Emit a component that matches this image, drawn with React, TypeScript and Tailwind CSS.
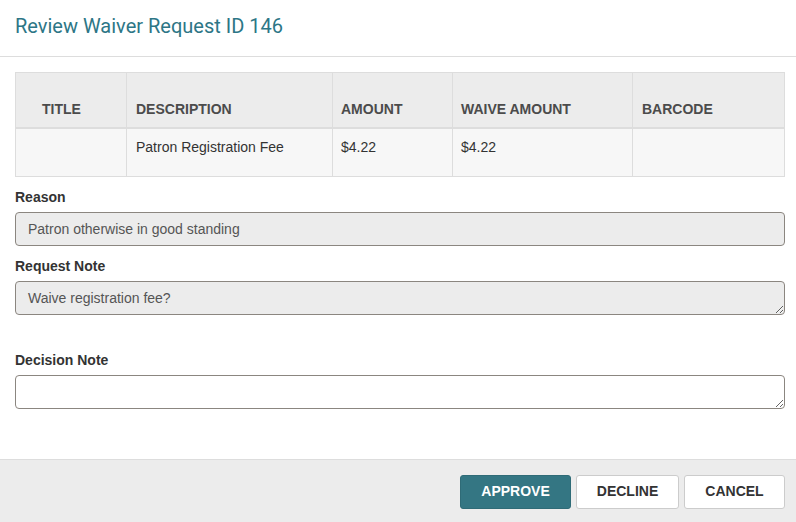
export default function App() {
  const arial = { fontFamily: '"Liberation Sans", Arial, sans-serif' };
  return (
    <div className="w-[796px] h-[522px] bg-white flex flex-col text-[#333]" style={arial}>
      <div className="h-[57px] border-b border-[#dddddd] flex items-center px-[15px]">
        <h1 className="text-[20px] text-[#2d7686] font-['Roboto',sans-serif] pb-[4px]">Review Waiver Request ID 146</h1>
      </div>
      <div className="flex-1 pl-[15px] pr-[11px] pt-[15px]">
        <table className="w-full border-collapse text-[14px]">
          <thead>
            <tr className="bg-[#ececec] h-[55px]">
              <th className="w-[111px] border border-[#dddddd] border-b-2 align-bottom text-left pl-[26px] pb-[7px] text-[14px] font-bold text-[#4b4b4b]">TITLE</th>
              <th className="w-[206px] border border-[#dddddd] border-b-2 align-bottom text-left pl-[9px] pb-[7px] text-[14px] font-bold text-[#4b4b4b]">DESCRIPTION</th>
              <th className="w-[120px] border border-[#dddddd] border-b-2 align-bottom text-left pl-[8px] pb-[7px] text-[14px] font-bold text-[#4b4b4b]">AMOUNT</th>
              <th className="w-[180px] border border-[#dddddd] border-b-2 align-bottom text-left pl-[8px] pb-[7px] text-[14px] font-bold text-[#4b4b4b]">WAIVE AMOUNT</th>
              <th className="border border-[#dddddd] border-b-2 align-bottom text-left pl-[9px] pb-[7px] text-[14px] font-bold text-[#4b4b4b]">BARCODE</th>
            </tr>
          </thead>
          <tbody>
            <tr className="bg-[#f7f7f7] h-[49px]">
              <td className="border border-[#dddddd] align-top"></td>
              <td className="border border-[#dddddd] align-top pl-[9px] pt-[8px]">Patron Registration Fee</td>
              <td className="border border-[#dddddd] align-top pl-[8px] pt-[8px]">$4.22</td>
              <td className="border border-[#dddddd] align-top pl-[8px] pt-[8px]">$4.22</td>
              <td className="border border-[#dddddd] align-top"></td>
            </tr>
          </tbody>
        </table>
        <label className="block mt-[10px] text-[14px] font-bold text-[#333]">Reason</label>
        <input
          readOnly
          value="Patron otherwise in good standing"
          className="mt-[4px] block w-full h-[34px] rounded-[4px] border border-[#8b8680] bg-[#ececec] px-[12px] text-[14px] text-[#555] outline-none"
          style={arial}
        />
        <label className="block mt-[10px] text-[14px] font-bold text-[#333]">Request Note</label>
        <textarea
          readOnly
          value="Waive registration fee?"
          className="mt-[4px] block w-full h-[34px] rounded-[4px] border border-[#8b8680] bg-[#ececec] px-[12px] py-[7px] text-[14px] leading-[18px] text-[#555] outline-none"
          style={arial}
        />
        <label className="block mt-[35px] text-[14px] font-bold text-[#333]">Decision Note</label>
        <textarea
          className="mt-[4px] block w-full h-[34px] rounded-[4px] border border-[#8b8680] bg-white px-[12px] py-[7px] text-[14px] leading-[18px] outline-none"
          style={arial}
        />
      </div>
      <div className="h-[63px] border-t border-[#dddddd] bg-[#ececec] flex items-center justify-end gap-[5px] px-[11px] pt-[1px]">
        <button className="w-[111px] h-[34px] rounded-[3px] bg-[#347683] border border-[#2f6b77] text-white text-[14px] font-bold">APPROVE</button>
        <button className="w-[103px] h-[34px] rounded-[3px] bg-white border border-[#cccccc] text-[#333] text-[14px] font-bold">DECLINE</button>
        <button className="w-[101px] h-[34px] rounded-[3px] bg-white border border-[#cccccc] text-[#333] text-[14px] font-bold">CANCEL</button>
      </div>
    </div>
  );
}
